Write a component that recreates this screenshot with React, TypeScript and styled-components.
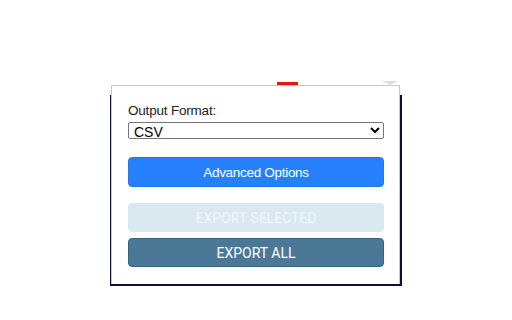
import React from "react";
import styled, { createGlobalStyle } from "styled-components";

const Global = createGlobalStyle`
  html, body { margin: 0; padding: 0; background: #ffffff; }
  body { font-family: "Liberation Sans", Arial, sans-serif; }
`;

const Stage = styled.div`
  position: relative;
  width: 512px;
  height: 320px;
  overflow: hidden;
  background: #ffffff;
`;

const Backdrop = styled.div`
  position: absolute;
  left: 110px;
  top: 95px;
  width: 292px;
  height: 191px;
  background: #0e0e3e;
`;

const RedMark = styled.div`
  position: absolute;
  left: 277px;
  top: 82px;
  width: 21px;
  height: 3px;
  background: #f01010;
`;

const GrayMark = styled.div`
  position: absolute;
  left: 382px;
  top: 81px;
  width: 0;
  height: 0;
  border-left: 8px solid transparent;
  border-right: 8px solid transparent;
  border-top: 4px solid #dcdcdc;
`;

const Popup = styled.div`
  position: absolute;
  left: 111px;
  top: 85px;
  width: 289px;
  height: 199px;
  box-sizing: border-box;
  background: #ffffff;
  border: 1px solid #c8c8c8;
  border-bottom: none;
  padding: 16px 16px 0 16px;
  display: flex;
  flex-direction: column;
`;

const Label = styled.label`
  font-family: "Liberation Sans", Arial, sans-serif;
  font-size: 13.5px;
  letter-spacing: -0.2px;
  line-height: 18px;
  color: #222222;
`;

const Select = styled.select`
  box-sizing: border-box;
  width: 256px;
  height: 17px;
  margin-top: 2px;
  padding: 0 0 0 1px;
  font-family: "Liberation Sans", Arial, sans-serif;
  font-size: 14px;
  line-height: 15px;
  color: #000000;
  background: #ffffff;
  border: 1px solid #767676;
  border-radius: 2px;
`;

const Button = styled.button<{ $variant: "primary" | "disabled" | "dark" }>`
  box-sizing: border-box;
  width: 256px;
  height: ${(p) => (p.$variant === "primary" ? "30px" : "29px")};
  margin-top: ${(p) => (p.$variant === "primary" ? "18px" : p.$variant === "disabled" ? "16px" : "6px")};
  border-radius: 4px;
  font-family: ${(p) =>
    p.$variant === "primary" ? `"Liberation Sans", Arial, sans-serif` : `Roboto, "Liberation Sans", sans-serif`};
  font-size: ${(p) => (p.$variant === "primary" ? "13.5px" : "14px")};
  font-weight: 400;
  letter-spacing: ${(p) => (p.$variant === "primary" ? "-0.3px" : "0")};
  color: ${(p) => (p.$variant === "disabled" ? "#f2f6f9" : "#ffffff")};
  background: ${(p) =>
    p.$variant === "primary" ? "#2780fb" : p.$variant === "disabled" ? "#dae8f0" : "#4a7896"};
  border: 1px solid
    ${(p) => (p.$variant === "primary" ? "#2277ee" : p.$variant === "disabled" ? "#dae8f0" : "#2f6585")};
  padding: 0;
  cursor: pointer;
`;

export default function App() {
  return (
    <Stage>
      <Global />
      <Backdrop />
      <RedMark />
      <GrayMark />
      <Popup>
        <Label htmlFor="fmt">Output Format:</Label>
        <Select id="fmt" defaultValue="csv">
          <option value="csv">CSV</option>
          <option value="json">JSON</option>
        </Select>
        <Button $variant="primary">Advanced Options</Button>
        <Button $variant="disabled" disabled>EXPORT SELECTED</Button>
        <Button $variant="dark">EXPORT ALL</Button>
      </Popup>
    </Stage>
  );
}
